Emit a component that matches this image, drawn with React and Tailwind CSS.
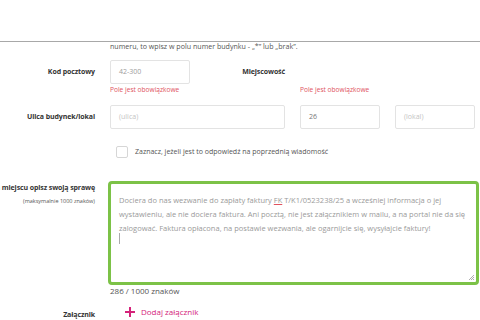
import React from 'react';

const font = { fontFamily: '"Open Sans", "Liberation Sans", sans-serif' };

function Label({ children, sub }) {
  return (
    <div className="w-[95px] shrink-0 flex flex-col items-end text-right">
      <span className="whitespace-nowrap text-[7px] font-bold tracking-[-0.1px] text-[#333]">{children}</span>
      {sub && <span className="whitespace-nowrap text-[5.5px] text-[#555] mt-[3px]">{sub}</span>}
    </div>
  );
}

function Field({ children, className = '', tone = 'text-[#c4c4c4]' }) {
  return (
    <div className={`h-[24px] border border-[#e3e3e3] rounded-[2px] flex items-center px-[8px] text-[7px] ${tone} ${className}`}>
      {children}
    </div>
  );
}

export default function App() {
  return (
    <div className="w-[480px] h-[320px] overflow-hidden bg-white relative" style={font}>
      <div className="h-[42px] border-b border-[#a8a8a8]" />
      <div className="pl-[110px] text-[7.1px] text-[#555] leading-[10px] -mt-[1px] whitespace-nowrap">
        numeru, to wpisz w polu numer budynku - „*” lub „brak”.
      </div>

      <div className="flex items-center gap-[15px] mt-[9px] h-[24px]">
        <Label>Kod pocztowy</Label>
        <div className="grid grid-cols-[175px_80px_80px] gap-x-[15px] items-center">
          <div className="flex items-center justify-between">
            <Field className="w-[80px]" tone="text-[#9d9d9d]">42-300</Field>
            <span className="text-[7px] font-bold tracking-[-0.1px] text-[#333]">Miejscowość</span>
          </div>
        </div>
      </div>
      <div className="ml-[110px] grid grid-cols-[175px_80px_80px] gap-x-[15px] mt-[1px] text-[6.6px] text-[#e0525f] leading-[10px]">
        <span>Pole jest obowiązkowe</span>
        <span className="whitespace-nowrap">Pole jest obowiązkowe</span>
      </div>

      <div className="flex items-center gap-[15px] mt-[10px]">
        <Label>Ulica budynek/lokal</Label>
        <div className="grid grid-cols-[175px_80px_80px] gap-x-[15px]">
          <Field>(ulica)</Field>
          <Field tone="text-[#777]">26</Field>
          <Field>(lokal)</Field>
        </div>
      </div>

      <div className="flex items-center ml-[116px] mt-[17px] gap-[7px]">
        <div className="w-[12px] h-[12px] border border-[#d6d6d6] rounded-[2px]" />
        <span className="text-[7px] text-[#555]">Zaznacz, jeżeli jest to odpowiedź na poprzednią wiadomość</span>
      </div>

      <div className="flex gap-[13px] mt-[23px]">
        <div className="pt-[2px]">
          <Label sub="(maksymalnie 1000 znaków)">W tym miejscu opisz swoją sprawę</Label>
        </div>
        <div>
          <div className="relative w-[371px] h-[104px] border-[3px] border-[#7cc247] rounded-[4px] px-[8px] pt-[9px] text-[7.5px] leading-[14px] text-[#9a9a9a]">
            <div>Dociera do nas wezwanie do zapłaty faktury <span className="underline decoration-[#e0525f]">FK</span> T/K1/0523238/25 a wcześniej informacja o jej</div>
            <div>wystawieniu, ale nie dociera faktura. Ani pocztą, nie jest załącznikiem w mailu, a na portal nie da się</div>
            <div>zalogować. Faktura opłacona, na postawie wezwania, ale ogarnijcie się, wysyłajcie faktury!</div>
            <div className="w-[1px] h-[11px] bg-[#aaa] -mt-[2px]" />
            <svg className="absolute right-[1px] bottom-[1px]" width="7" height="7" viewBox="0 0 7 7">
              <path d="M6 1L1 6M6 3L3 6M6 5L5 6" stroke="#999" strokeWidth="0.8" />
            </svg>
          </div>
          <div className="ml-[2px] text-[8px] text-[#555] leading-[10px] mt-[1px]">286 / 1000 znaków</div>
        </div>
      </div>

      <div className="flex items-start gap-[15px] mt-[9px]">
        <div className="pt-[5px]"><Label>Załącznik</Label></div>
        <div className="flex items-center gap-[6px] ml-[15px] mt-[2px] text-[8px] text-[#d4237a] leading-[10px]">
          <svg width="10" height="10" viewBox="0 0 10 10">
            <path d="M5 0V10M0 5H10" stroke="#d4237a" strokeWidth="2" />
          </svg>
          <span>Dodaj załącznik</span>
        </div>
      </div>
    </div>
  );
}
